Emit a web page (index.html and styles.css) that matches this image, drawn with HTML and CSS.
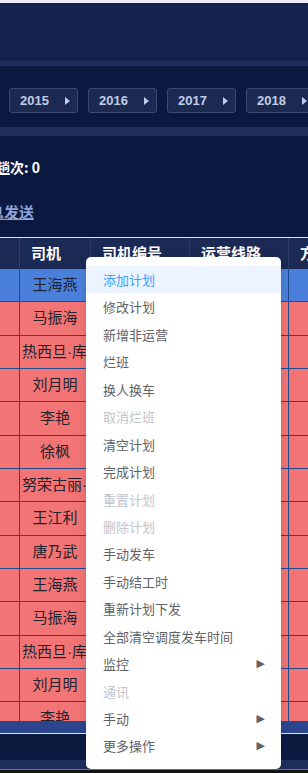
FILE: index.html
```html
<!DOCTYPE html>
<html lang="zh">
<head>
<meta charset="utf-8">
<title>调度</title>
<link rel="stylesheet" href="styles.css">
</head>
<body>
<div class="app">
  <div class="topstrip"></div>
  <div class="navbar"></div>
  <div class="navsep"></div>
  <div class="years">
    <button class="year">2015<span class="tri"></span></button>
    <button class="year">2016<span class="tri"></span></button>
    <button class="year">2017<span class="tri"></span></button>
    <button class="year">2018<span class="tri"></span></button>
  </div>
  <div class="band"></div>
  <div class="info">
    <div class="stat"><span class="u">趟</span>次: 0</div>
    <div class="send">息发送</div>
  </div>
  <div class="table">
    <div class="row head">
      <div class="cell"></div>
      <div class="cell">司机</div>
      <div class="cell">司机编号</div>
      <div class="cell">运营线路</div>
      <div class="cell">方向</div>
    </div>
    <div class="tbody">
      <div class="row sel"><div class="cell"></div><div class="cell">王海燕</div><div class="cell"></div><div class="cell"></div><div class="cell"></div></div>
      <div class="row"><div class="cell"></div><div class="cell">马振海</div><div class="cell"></div><div class="cell"></div><div class="cell"></div></div>
      <div class="row"><div class="cell"></div><div class="cell">热西旦·库尔班</div><div class="cell"></div><div class="cell"></div><div class="cell"></div></div>
      <div class="row"><div class="cell"></div><div class="cell">刘月明</div><div class="cell"></div><div class="cell"></div><div class="cell"></div></div>
      <div class="row"><div class="cell"></div><div class="cell">李艳</div><div class="cell"></div><div class="cell"></div><div class="cell"></div></div>
      <div class="row"><div class="cell"></div><div class="cell">徐枫</div><div class="cell"></div><div class="cell"></div><div class="cell"></div></div>
      <div class="row"><div class="cell"></div><div class="cell">努荣古丽·艾力</div><div class="cell"></div><div class="cell"></div><div class="cell"></div></div>
      <div class="row"><div class="cell"></div><div class="cell">王江利</div><div class="cell"></div><div class="cell"></div><div class="cell"></div></div>
      <div class="row"><div class="cell"></div><div class="cell">唐乃武</div><div class="cell"></div><div class="cell"></div><div class="cell"></div></div>
      <div class="row"><div class="cell"></div><div class="cell">王海燕</div><div class="cell"></div><div class="cell"></div><div class="cell"></div></div>
      <div class="row"><div class="cell"></div><div class="cell">马振海</div><div class="cell"></div><div class="cell"></div><div class="cell"></div></div>
      <div class="row"><div class="cell"></div><div class="cell">热西旦·库尔班</div><div class="cell"></div><div class="cell"></div><div class="cell"></div></div>
      <div class="row"><div class="cell"></div><div class="cell">刘月明</div><div class="cell"></div><div class="cell"></div><div class="cell"></div></div>
      <div class="row"><div class="cell"></div><div class="cell">李艳</div><div class="cell"></div><div class="cell"></div><div class="cell"></div></div>
    </div>
  </div>
  <div class="scrollbar"></div>
  <div class="footline"></div>
  <div class="footer"></div>
  <div class="footband"></div>
  <div class="footedge"></div>
  <div class="blackstrip"></div>

  <ul class="menu">
    <li class="item hover">添加计划</li>
    <li class="item">修改计划</li>
    <li class="item">新增非运营</li>
    <li class="item">烂班</li>
    <li class="item">换人换车</li>
    <li class="item disabled">取消烂班</li>
    <li class="item">清空计划</li>
    <li class="item">完成计划</li>
    <li class="item disabled">重置计划</li>
    <li class="item disabled">删除计划</li>
    <li class="item">手动发车</li>
    <li class="item">手动结工时</li>
    <li class="item">重新计划下发</li>
    <li class="item">全部清空调度发车时间</li>
    <li class="item sub">监控<span class="arrow">▶</span></li>
    <li class="item disabled">通讯</li>
    <li class="item sub">手动<span class="arrow">▶</span></li>
    <li class="item sub">更多操作<span class="arrow">▶</span></li>
  </ul>
</div>
</body>
</html>
```

FILE: styles.css
```css
* { box-sizing: border-box; }
html, body {
  margin: 0;
  padding: 0;
  background: #0b1940;
  overflow: hidden;
}
body {
  font-family: "Noto Sans CJK SC", "Liberation Sans", sans-serif;
}
.app {
  position: relative;
  width: 308px;
  height: 773px;
  overflow: hidden;
  display: flex;
  flex-direction: column;
}
.topstrip { height: 3px; background: #eceef3; flex: none; }
.navbar { height: 54px; background: #15244f; flex: none; }
.navsep {
  height: 9px;
  flex: none;
  border-top: 3px solid #101d46;
  background: #1d2c5a;
}
.years {
  flex: none;
  height: 61px;
  padding: 22px 0 0 9px;
  display: flex;
  gap: 10px;
  background: #0b1940;
}
.year {
  flex: none;
  width: 69px;
  height: 25px;
  padding: 0 0 0 10px;
  margin: 0;
  display: flex;
  align-items: center;
  background: #1c2a52;
  border: 1px solid #3b4a70;
  border-radius: 3px;
  color: #c0cce8;
  font-family: "Liberation Sans", Arial, sans-serif;
  font-weight: bold;
  font-size: 13px;
}
.tri {
  margin-left: 16px;
  width: 0;
  height: 0;
  border-left: 5px solid #c0cce8;
  border-top: 4px solid transparent;
  border-bottom: 4px solid transparent;
}
.band { height: 9px; background: #1f2e5d; flex: none; }
.info {
  flex: none;
  height: 101px;
  padding-top: 22px;
  position: relative;
}
.stat {
  margin-left: -4px;
  color: #ffffff;
  font-weight: bold;
  font-size: 14px;
  line-height: 18px;
}
.stat .u { text-decoration: underline; }
.send {
  margin-left: -11px;
  margin-top: 27px;
  color: #8ea4d8;
  font-weight: bold;
  font-size: 15px;
  line-height: 18px;
  text-decoration: underline;
}
.table {
  flex: none;
  border-top: 1px solid #dfe4ef;
}
.row {
  display: grid;
  grid-template-columns: 20px 71px 99px 99px 100px;
  height: 33.333px;
  background: #f37474;
  border-bottom: 1px solid #1e4b8c;
}
.row .cell {
  border-right: 1px solid #1e4b8c;
  overflow: hidden;
  white-space: nowrap;
  text-align: center;
  font-family: "Liberation Sans", "Noto Sans CJK SC", sans-serif;
  font-size: 15px;
  color: #23232f;
  padding: 0 2px;
  line-height: 32px;
}
.row.head {
  height: 31px;
  background: #1b2a55;
  border-bottom: none;
}
.row.head .cell {
  border-right: 1px solid #2a3c6c;
  color: #ffffff;
  font-weight: bold;
  text-align: left;
  padding-left: 11px;
  line-height: 31px;
}
.row.sel { background: #4a80d9; }
.tbody {
  height: 452px;
  overflow: hidden;
}
.scrollbar { flex: none; height: 12px; background: #2b468f; }
.footline { flex: none; height: 1px; background: #e6e9f0; }
.footer { flex: none; height: 26px; background: #0b1a3f; }
.footband { flex: none; height: 9px; background: #1f2f5e; }
.footedge { flex: none; height: 1px; background: #3a7fd6; }
.blackstrip { flex: 1; background: #141414; }

.menu {
  position: absolute;
  left: 86px;
  top: 257px;
  width: 195px;
  margin: 0;
  padding: 9px 0;
  list-style: none;
  background: #ffffff;
  border-radius: 5px;
  box-shadow: 0 2px 10px rgba(0, 0, 0, 0.15);
}
.item {
  height: 27.45px;
  line-height: 27.45px;
  padding: 0 16px 0 17px;
  font-size: 13px;
  color: #606266;
  display: flex;
  justify-content: space-between;
  align-items: center;
}
.item.hover { background: #ecf5ff; color: #409eff; }
.item.disabled { color: #c0c4cc; }
.arrow { font-size: 11px; color: #606266; font-family: "DejaVu Sans", sans-serif; }
```
